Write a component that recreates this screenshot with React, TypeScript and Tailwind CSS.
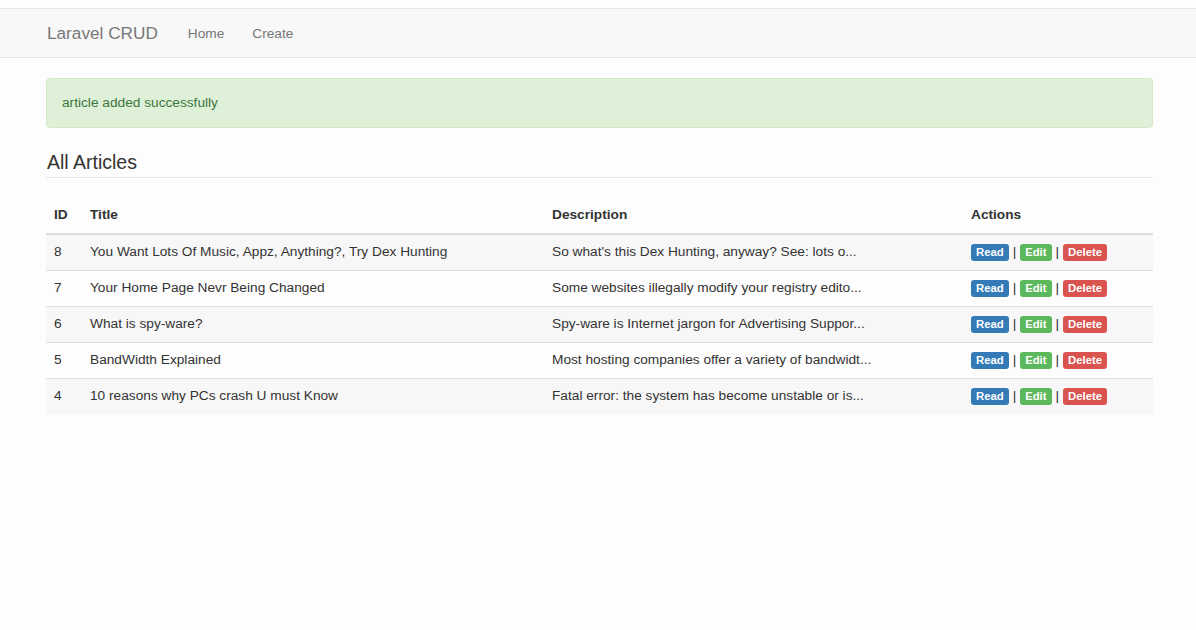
import React from "react";

const articles = [
  { id: 8, title: "You Want Lots Of Music, Appz, Anything?, Try Dex Hunting", description: "So what's this Dex Hunting, anyway? See: lots o..." },
  { id: 7, title: "Your Home Page Nevr Being Changed", description: "Some websites illegally modify your registry edito..." },
  { id: 6, title: "What is spy-ware?", description: "Spy-ware is Internet jargon for Advertising Suppor..." },
  { id: 5, title: "BandWidth Explained", description: "Most hosting companies offer a variety of bandwidt..." },
  { id: 4, title: "10 reasons why PCs crash U must Know", description: "Fatal error: the system has become unstable or is..." },
];

export default function App() {
  return (
    <div className="min-h-[630px] bg-[#fdfdfd] pt-[8px] text-[13.7px] text-[#333] font-['Liberation_Sans',Arial,sans-serif]">
      {/* Navbar */}
      <nav className="h-[50px] bg-[#f8f8f8] border-y border-[#e7e7e7]">
        <div className="mx-[46px] h-full pt-[2px] flex items-center">
          <a className="text-[17.2px] text-[#777] pl-[1px] mr-[30px]">Laravel CRUD</a>
          <a className="text-[13.7px] text-[#777] mr-[28px]">Home</a>
          <a className="text-[13.7px] text-[#777]">Create</a>
        </div>
      </nav>

      <div className="mx-[46px] w-[1107px]">
        {/* Alert */}
        <div className="mt-[20px] h-[50px] flex items-center px-[15px] bg-[#dff0d8] border border-[#d6e9c6] rounded-[4px] text-[#3c763d]">
          article added successfully
        </div>

        {/* Heading */}
        <div className="mt-[23px] pb-[4px] border-b border-[#e5e5e5]">
          <h3 className="text-[19.5px] leading-[22px] font-normal pl-[1px]">All Articles</h3>
        </div>

        {/* Table */}
        <table className="mt-[19px] w-full border-collapse">
          <thead>
            <tr className="border-b-2 border-[#ddd]">
              <th className="w-[36px] h-[37px] px-[8px] text-left font-bold">ID</th>
              <th className="w-[462px] px-[8px] text-left font-bold">Title</th>
              <th className="w-[419px] px-[8px] text-left font-bold">Description</th>
              <th className="px-[8px] text-left font-bold">Actions</th>
            </tr>
          </thead>
          <tbody>
            {articles.map((a, i) => (
              <tr key={a.id} className={i % 2 === 0 ? "bg-[#f7f7f7] border-t border-[#ddd]" : "border-t border-[#ddd]"}>
                <td className="h-[36px] px-[8px]">{a.id}</td>
                <td className="px-[8px]">{a.title}</td>
                <td className="px-[8px]">{a.description}</td>
                <td className="px-[8px] whitespace-nowrap">
                  <span className="inline-block h-[17px] leading-[17px] px-[5px] rounded-[3px] bg-[#337ab7] text-white text-[11.3px] font-bold align-middle">Read</span>
                  <span className="mx-[4px] align-middle">|</span>
                  <span className="inline-block h-[17px] leading-[17px] px-[5px] rounded-[3px] bg-[#5cb85c] text-white text-[11.3px] font-bold align-middle">Edit</span>
                  <span className="mx-[4px] align-middle">|</span>
                  <span className="inline-block h-[17px] leading-[17px] px-[5px] rounded-[3px] bg-[#d9534f] text-white text-[11.3px] font-bold align-middle">Delete</span>
                </td>
              </tr>
            ))}
          </tbody>
        </table>
      </div>
    </div>
  );
}
